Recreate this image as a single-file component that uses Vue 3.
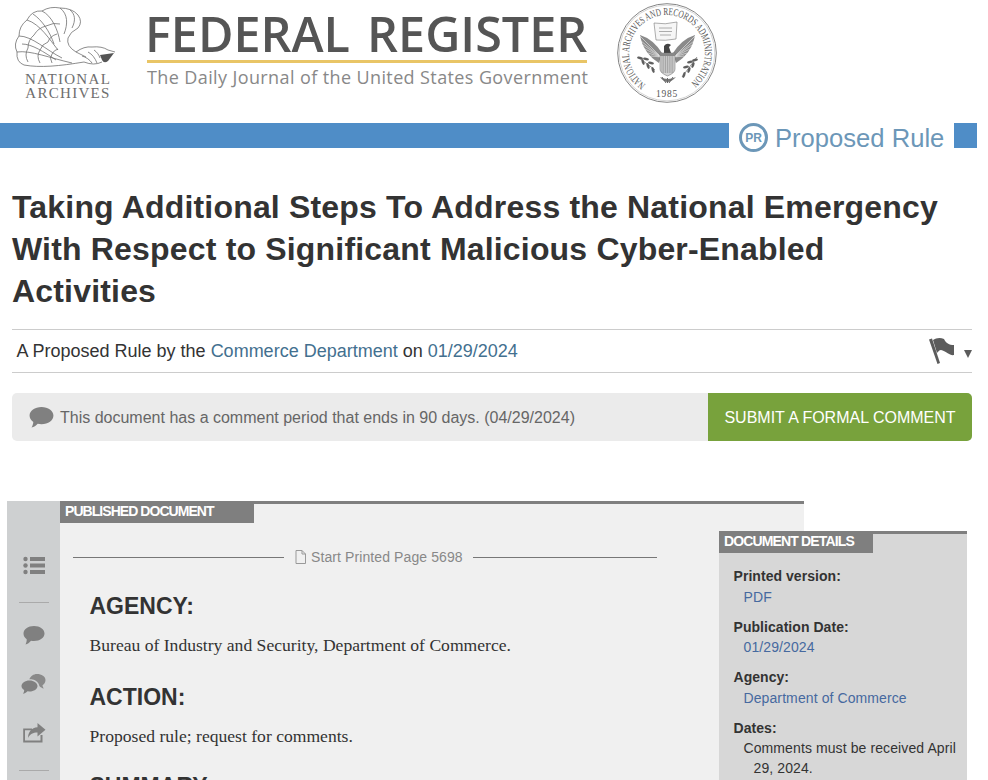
<script setup>
const feathers = [
  'M24 65Q16 62 17 52Q13 44 19 36Q19 26 27 20Q32 10 42 11Q50 6 60 8Q72 8 78 15Q83 22 78 28Q70 32 68 38Q66 46 76 52L86 57',
  'M17 52C30 50 50 58 72 63',
  'M19 36C32 36 46 50 62 58',
  'M27 20C40 24 50 40 58 50',
  'M42 11C52 16 58 30 60 42',
  'M60 8C68 14 68 24 64 34',
  'M70 10C75 14 76 20 72 28',
  'M28 62Q24 55 28 48Q28 40 34 35Q38 28 46 26Q54 22 60 24',
  'M40 63Q36 56 40 50Q42 44 48 42Q50 36 57 34',
  'M52 63Q49 58 52 54Q54 50 58 49',
  'M24 65C40 68 60 66 84 62',
  'M22 44C32 44 44 52 56 60',
  'M33 14C42 20 50 32 54 44',
  'M76 52Q84 46 92 47Q102 46 108 50L115 52',
  'M84 62Q94 66 102 62',
  'M82 56C86 57 90 60 92 63',
  'M88 52C92 54 95 58 97 63',
  'M94 50C97 52 99 55 100 58'
]
const stripes = [0, 1, 2, 3, 4, 5, 6]
const leftFan = [[23, 33], [24, 38], [26, 42], [28, 46], [31, 50], [34, 53]]
const rightFan = [[78, 33], [77, 38], [75, 42], [73, 46], [70, 50], [67, 53]]
const leftLeaves = [[23, 55], [26, 59], [29, 56], [31, 63], [34, 60], [36, 67]]
const rightLeaves = [[78, 57], [76, 62], [73, 59], [72, 67], [69, 64], [67, 72]]
const details = [
  { label: 'Printed version:', value: 'PDF', link: true },
  { label: 'Publication Date:', value: '01/29/2024', link: true },
  { label: 'Agency:', value: 'Department of Commerce', link: true },
  { label: 'Dates:', value: 'Comments must be received April 29, 2024.', link: false }
]
</script>

<template>
  <div class="page">
    <header class="masthead">
      <div class="archives">
        <svg class="eagle" viewBox="0 0 120 68" width="120" height="68" aria-hidden="true">
          <path v-for="(d, i) in feathers" :key="i" :d="d" fill="none" stroke="#707070" stroke-width="0.8" />
          <path d="M100 55L114 53L108 61Q104 64 102 60Z" fill="#555" />
        </svg>
        <div class="archives-name">NATIONAL<br />ARCHIVES</div>
      </div>
      <div class="wordmark">
        <div class="wordmark-title">FEDERAL&nbsp; REGISTER</div>
        <div class="wordmark-rule"></div>
        <div class="wordmark-sub">The Daily Journal of the United States Government</div>
      </div>
      <svg class="seal" viewBox="0 0 100 100" width="100" height="100" aria-hidden="true">
        <defs>
          <path id="sealTop" d="M28.700 81.500A38 38 0 1 1 71.300 81.500" />
        </defs>
        <circle cx="50" cy="50" r="49.300" fill="#fff" stroke="#777" stroke-width="0.9" />
        <circle cx="50" cy="50" r="47.800" fill="none" stroke="#aaa" stroke-width="0.5" />
        <text class="seal-text"><textPath href="#sealTop" textLength="190" lengthAdjust="spacingAndGlyphs">NATIONAL ARCHIVES AND RECORDS ADMINISTRATION</textPath></text>
        <text class="seal-year" x="50" y="94" text-anchor="middle">1985</text>
        <path d="M37 20Q48 22 60 19L59 36Q48 38 39 37Z" fill="#f6f6f6" stroke="#777" stroke-width="0.6" />
        <path d="M42 25H55M42 28.500H55M43 32H54" stroke="#999" stroke-width="0.8" />
        <path d="M23 32Q36 36 45 50L42 60Q26 50 23 32Z" fill="#8a8a8a" />
        <path d="M78 32Q65 36 56 50L59 60Q75 50 78 32Z" fill="#8a8a8a" />
        <g stroke="#eee" stroke-width="0.6">
          <path v-for="(p, i) in leftFan" :key="'lf' + i" :d="`M${p[0]} ${p[1]}L44 54`" />
          <path v-for="(p, i) in rightFan" :key="'rf' + i" :d="`M${p[0]} ${p[1]}L57 54`" />
        </g>
        <path d="M47 50L47 43Q50 39 54 42L52 44L54 50Z" fill="#444" />
        <path d="M43 50H58V66Q58 70 50.500 73Q43 70 43 66Z" fill="#d4d4d4" stroke="#666" stroke-width="0.5" />
        <path v-for="n in stripes" :key="'s' + n" :d="`M${45 + n * 1.800} 53V70`" stroke="#8c8c8c" stroke-width="0.7" />
        <path d="M43 50H58V53H43Z" fill="#888" />
        <path d="M38 67L21 54M65 74L80 54" stroke="#666" stroke-width="0.7" fill="none" />
        <g fill="#5f5f5f">
          <ellipse v-for="(l, i) in leftLeaves" :key="'ll' + i" :cx="l[0]" :cy="l[1]" rx="3" ry="1.300" :transform="`rotate(${i % 2 ? 70 : 10} ${l[0]} ${l[1]})`" />
          <ellipse v-for="(l, i) in rightLeaves" :key="'rl' + i" :cx="l[0]" :cy="l[1]" rx="3" ry="1.300" :transform="`rotate(${i % 2 ? -70 : -10} ${l[0]} ${l[1]})`" />
        </g>
        <path d="M43 74Q50 84 59 74Q51 78 43 74Z" fill="#777" />
        <path d="M45 74L49 80M56 74L52 80M50.500 75V80" stroke="#666" stroke-width="1" />
      </svg>
    </header>

    <div class="banner">
      <div class="banner-bar"></div>
      <div class="banner-type">
        <span class="pr-badge">PR</span>
        <span class="banner-label">Proposed Rule</span>
      </div>
      <div class="banner-end"></div>
    </div>

    <h1 class="title">Taking Additional Steps To Address the National Emergency With Respect to Significant Malicious Cyber-Enabled Activities</h1>

    <div class="meta">
      <p class="meta-text">A Proposed Rule by the <a class="meta-link">Commerce Department</a> on <a class="meta-link">01/29/2024</a></p>
      <div class="flag-menu">
        <svg viewBox="0 0 30 28" width="30" height="28" aria-hidden="true">
          <path d="M1 2.500L4 1.500L12 26L9.500 27Z" fill="#5c5c5c" />
          <path d="M5 3C8 1 12 0 16 2C18 6 21 8 26 8L26 18C22 19 18 14 13 13C11 13 10 15 9 16Z" fill="#5c5c5c" />
        </svg>
        <span class="caret"></span>
      </div>
    </div>

    <div class="comment-bar">
      <div class="comment-note">
        <svg viewBox="0 0 26 22" width="25" height="21" aria-hidden="true">
          <path d="M13 0C20 0 25.500 3.800 25.500 9C25.500 14.200 20 18 13 18C11.600 18 10.300 17.800 9 17.500C7.500 19.500 5 21 2.500 21.500C3.500 20 4.300 18 4.400 15.700C1.800 14 0.500 11.700 0.500 9C0.500 3.800 6 0 13 0Z" fill="#808080" />
        </svg>
        <span>This document has a comment period that ends in 90 days. (04/29/2024)</span>
      </div>
      <a class="comment-button">SUBMIT A FORMAL COMMENT</a>
    </div>

    <section class="document">
      <nav class="doc-tools">
        <svg class="tool tool-list" viewBox="0 0 22 19" width="22" height="19" aria-hidden="true">
          <g fill="#808080">
            <circle cx="2.500" cy="3" r="2.200" /><rect x="7" y="1" width="15" height="4" />
            <circle cx="2.500" cy="9.500" r="2.200" /><rect x="7" y="7.500" width="15" height="4" />
            <circle cx="2.500" cy="16" r="2.200" /><rect x="7" y="14" width="15" height="4" />
          </g>
        </svg>
        <hr class="tool-rule" />
        <svg class="tool tool-comment" viewBox="0 0 22 19" width="22" height="19" aria-hidden="true">
          <path d="M11 0C17 0 21.500 3.200 21.500 7.500C21.500 11.800 17 15 11 15C10 15 9 14.900 8 14.700C6.500 16.500 4.500 18 2.500 18.500C3.300 17 3.800 15 3.700 13.200C1.700 11.800 0.500 9.800 0.500 7.500C0.500 3.200 5 0 11 0Z" fill="#808080" />
        </svg>
        <svg class="tool tool-comments" viewBox="0 0 25 20" width="25" height="20" aria-hidden="true">
          <path d="M16 0C20.500 0 24.500 2.500 24.500 6C24.500 8.200 23.400 10 21.500 11.200C21.600 12.500 22 13.500 22.800 14.500C21 14.200 19.500 13.300 18.400 12C18 9 15 6 11.500 5.500C10.500 5.300 9.300 5.200 8.300 5.300C9.500 2.200 12.500 0 16 0Z" fill="#8a8a8a" />
          <path d="M8.500 6.500C13 6.500 16.500 9 16.500 12C16.500 15 13 17.500 8.500 17.500L6.500 17.300C5 18.800 3.500 19.500 2 19.800C2.800 18.700 3.200 17.400 3.200 16C1.500 15 0.500 13.600 0.500 12C0.500 9 4 6.500 8.500 6.500Z" fill="#808080" />
        </svg>
        <svg class="tool tool-share" viewBox="0 0 24 20" width="24" height="20" aria-hidden="true">
          <path d="M1.200 5.500H10V7.300H3V17.500H18.500V12H20.500V19.500H1.200Z" fill="#808080" />
          <path d="M15.500 0L23.500 6.800L15.500 13.500V9.500C11 9.500 8 11 6 15C6 9.500 9.500 4.500 15.500 4.300Z" fill="#808080" />
        </svg>
        <hr class="tool-rule tool-rule-last" />
      </nav>
      <div class="doc-body">
        <div class="doc-tab">PUBLISHED DOCUMENT</div>
        <div class="page-marker">
          <span class="marker-line"></span>
          <svg viewBox="0 0 11 14" width="11" height="14" aria-hidden="true">
            <path d="M1 .5H7L10.500 4V13.500H1ZM7 .5V4H10.500" fill="none" stroke="#999" stroke-width="1" />
          </svg>
          <span class="marker-text">Start Printed Page 5698</span>
          <span class="marker-line marker-line-right"></span>
        </div>
        <div class="doc-text">
          <h2>AGENCY:</h2>
          <p>Bureau of Industry and Security, Department of Commerce.</p>
          <h2>ACTION:</h2>
          <p>Proposed rule; request for comments.</p>
          <h2 class="doc-cut">SUMMARY:</h2>
        </div>
      </div>
    </section>

    <aside class="details">
      <div class="details-tab">DOCUMENT DETAILS</div>
      <dl class="details-list">
        <template v-for="d in details" :key="d.label">
          <dt>{{ d.label }}</dt>
          <dd :class="{ 'is-link': d.link }">{{ d.value }}</dd>
        </template>
      </dl>
    </aside>
  </div>
</template>

<style scoped>
.page {
  position: relative;
  width: 988px;
  height: 780px;
  overflow: hidden;
  background: #fff;
  font-family: "Liberation Sans", Arial, sans-serif;
  color: #333;
}
.masthead {
  display: flex;
  height: 123px;
}
.archives {
  width: 147px;
  flex: none;
}
.eagle {
  display: block;
}
.archives-name {
  margin: 4px 0 0 24px;
  width: 88px;
  text-align: center;
  font-family: "Liberation Serif", serif;
  font-size: 15px;
  line-height: 14px;
  letter-spacing: 1.300px;
  color: #6e6e6e;
}
.wordmark {
  width: 442px;
  flex: none;
}
.wordmark-title {
  margin: 6px 0 0 -2px;
  font-family: "Open Sans", sans-serif;
  font-weight: 600;
  font-size: 48.500px;
  line-height: 54px;
  word-spacing: -4px;
  white-space: nowrap;
  color: #555;
}
.wordmark-rule {
  width: 440px;
  height: 3px;
  background: #e9c566;
}
.wordmark-sub {
  margin-top: 2px;
  font-family: "Open Sans", sans-serif;
  font-size: 18px;
  line-height: 25px;
  letter-spacing: .39px;
  white-space: nowrap;
  color: #888;
}
.seal {
  margin: 3px 0 0 28px;
  flex: none;
}
.seal-text {
  font-family: "Liberation Serif", serif;
  font-size: 10.500px;
  fill: #555;
}
.seal-year {
  font-family: "Liberation Serif", serif;
  font-size: 9.500px;
  letter-spacing: .8px;
  fill: #555;
}
.banner {
  display: flex;
  align-items: center;
  height: 25px;
}
.banner-bar {
  width: 729px;
  height: 25px;
  flex: none;
  background: #4f8dc7;
}
.banner-type {
  display: flex;
  align-items: center;
  gap: 7px;
  width: 215px;
  flex: none;
  padding-left: 10px;
  box-sizing: border-box;
  font-size: 25.600px;
  color: #6c97b8;
  white-space: nowrap;
}
.banner-label {
  margin-top: 5px;
}
.pr-badge {
  width: 29px;
  height: 29px;
  margin-top: 4px;
  box-sizing: border-box;
  border: 3px solid #6c97b8;
  border-radius: 50%;
  display: flex;
  align-items: center;
  justify-content: center;
  font-size: 12px;
  font-weight: 700;
  flex: none;
}
.banner-end {
  width: 23px;
  margin-left: 10px;
  height: 25px;
  flex: none;
  background: #4f8dc7;
}
.title {
  margin: 38px 0 0 12px;
  width: 960px;
  font-size: 32px;
  font-weight: 700;
  line-height: 42px;
  letter-spacing: .18px;
  color: #333;
}
.meta {
  display: flex;
  align-items: center;
  justify-content: space-between;
  box-sizing: border-box;
  margin: 17px 0 0 12px;
  width: 960px;
  height: 44px;
  padding: 0 0 0 4.500px;
  border-top: 1px solid #ccc;
  border-bottom: 1px solid #ccc;
}
.meta-text {
  margin: 0;
  font-size: 18px;
  color: #333;
}
.meta-link {
  color: #43708f;
}
.flag-menu {
  display: flex;
  align-items: center;
  gap: 6px;
}
.caret {
  width: 0;
  height: 0;
  margin-top: 6px;
  border-left: 4.500px solid transparent;
  border-right: 4.500px solid transparent;
  border-top: 8px solid #5c5c5c;
}
.comment-bar {
  display: flex;
  justify-content: space-between;
  margin: 20px 0 0 12px;
  width: 960px;
  height: 48px;
  background: #ebebeb;
  border-radius: 5px;
}
.comment-note {
  display: flex;
  align-items: center;
  gap: 6px;
  padding: 1px 0 0 17px;
  font-size: 16px;
  color: #666;
}
.comment-button {
  display: flex;
  align-items: center;
  justify-content: center;
  width: 264px;
  padding-top: 1px;
  box-sizing: border-box;
  background: #78a23c;
  border-radius: 0 5px 5px 0;
  font-size: 16px;
  color: #fff;
  white-space: nowrap;
}
.document {
  display: flex;
  margin: 60px 0 0 7px;
  width: 797px;
  height: 279px;
}
.doc-tools {
  display: flex;
  flex-direction: column;
  align-items: center;
  width: 53px;
  flex: none;
  padding-top: 55px;
  box-sizing: border-box;
  background: #ced0d1;
}
.tool {
  display: block;
  flex: none;
}
.tool-rule {
  width: 30px;
  margin: 27px 0 23px;
  border: 0;
  border-top: 1px solid #aaa;
}
.tool-rule-last {
  margin: 27px 0 0;
}
.tool-comment {
  margin-bottom: 29px;
}
.tool-comments {
  margin-bottom: 29px;
}
.doc-body {
  flex: 1;
  min-width: 0;
  overflow: hidden;
  background: #f0f0f0;
  border-top: 3px solid #7f7f7f;
}
.doc-tab {
  width: 194px;
  height: 19px;
  box-sizing: border-box;
  padding-left: 5px;
  background: #7f7f7f;
  color: #fff;
  font-size: 14px;
  font-weight: 700;
  letter-spacing: -.95px;
  line-height: 15px;
  white-space: nowrap;
}
.page-marker {
  display: flex;
  align-items: center;
  width: 584px;
  margin: 26px 0 0 13px;
  height: 16px;
  gap: 5px;
  color: #888;
  font-size: 14px;
  letter-spacing: .1px;
}
.marker-line {
  width: 211px;
  margin-right: 6px;
  border-top: 1px solid #777;
  flex: none;
}
.marker-line-right {
  width: 184px;
  margin: 0 0 0 5px;
}
.marker-text {
  white-space: nowrap;
}
.doc-text {
  margin: 0 0 0 29.500px;
  padding-top: 28px;
}
.doc-text h2 {
  margin: 0;
  font-size: 23px;
  line-height: 27px;
  color: #333;
}
.doc-text p {
  margin: 15px 0 28.500px;
  font-family: "Liberation Serif", serif;
  font-size: 17.600px;
  line-height: 20px;
  color: #333;
}
.doc-text .doc-cut {
  margin-top: -1px;
}
.details {
  position: absolute;
  left: 719px;
  top: 531px;
  width: 248px;
  height: 249px;
  box-sizing: border-box;
  background: #d7d7d7;
  border-top: 3px solid #7f7f7f;
}
.details-tab {
  width: 154px;
  height: 19px;
  box-sizing: border-box;
  padding-left: 5px;
  background: #7f7f7f;
  color: #fff;
  font-size: 14px;
  font-weight: 700;
  letter-spacing: -.86px;
  line-height: 15px;
  white-space: nowrap;
}
.details-list {
  margin: 13px 0 0 14.500px;
  font-size: 14px;
  line-height: 20px;
  letter-spacing: .1px;
  color: #333;
}
.details-list dt {
  font-weight: 700;
  letter-spacing: .05px;
}
.details-list dd {
  margin: .6px 8px 10px 20px;
  text-indent: -10px;
}
.details-list dd.is-link {
  color: #46699f;
}
</style>

<style>
html, body { background: #fff; }
</style>
